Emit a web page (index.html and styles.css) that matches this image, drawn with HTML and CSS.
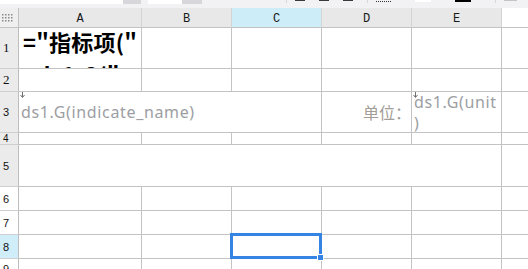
FILE: index.html
```html
<!DOCTYPE html>
<html lang="zh">
<head>
<meta charset="utf-8">
<title>Sheet</title>
<link rel="stylesheet" href="styles.css">
</head>
<body>
<div class="toolbar">
  <div class="tb-group">
    <span class="tb-input tb-w1"></span><span class="tb-drop"></span>
    <span class="tb-input tb-w2"></span><span class="tb-drop tb-drop2"></span>
  </div>
  <div class="tb-group tb-right">
    <span class="tb-sep"></span>
    <span class="tb-dash"></span><span class="tb-dash"></span><span class="tb-dash"></span>
    <span class="tb-sep"></span>
    <span class="tb-dots"></span>
    <span class="tb-white"></span>
    <span class="tb-black"></span>
    <span class="tb-sep"></span>
    <span class="tb-grey"></span>
    <span class="tb-grey tb-grey2"></span>
  </div>
</div>
<div class="sheet">
  <div class="corner">
    <svg width="11" height="8" viewBox="0 0 11 8">
      <g fill="#8a8a8a">
        <rect x="0" y="0" width="1.5" height="1.5"/><rect x="3" y="0" width="1.5" height="1.5"/><rect x="6" y="0" width="1.5" height="1.5"/><rect x="9" y="0" width="1.5" height="1.5"/>
        <rect x="0" y="3" width="1.5" height="1.5"/><rect x="3" y="3" width="1.5" height="1.5"/><rect x="6" y="3" width="1.5" height="1.5"/><rect x="9" y="3" width="1.5" height="1.5"/>
        <rect x="0" y="6" width="1.5" height="1.5"/><rect x="3" y="6" width="1.5" height="1.5"/><rect x="6" y="6" width="1.5" height="1.5"/><rect x="9" y="6" width="1.5" height="1.5"/>
      </g>
    </svg>
  </div>
  <div class="ch">A</div>
  <div class="ch">B</div>
  <div class="ch ch-active">C</div>
  <div class="ch">D</div>
  <div class="ch">E</div>
  <div class="ch ch-blank"></div>

  <div class="rh rh-serif">1</div>
  <div class="c formula"><span class="formula-text">="指标项("+ds1.G("unit")+")"</span></div>
  <div class="c"></div><div class="c"></div><div class="c"></div><div class="c"></div><div class="c f"></div>

  <div class="rh rh-serif">2</div>
  <div class="c"></div><div class="c"></div><div class="c"></div><div class="c"></div><div class="c"></div><div class="c f"></div>

  <div class="rh">3</div>
  <div class="c span3 expand">
    <svg class="arrow" width="5" height="6" viewBox="0 0 5 6"><path d="M2.5 0V5M0.5 3L2.5 5.5L4.5 3" fill="none" stroke="#707070" stroke-width="1"/></svg>
    <span class="data">ds1.G(indicate_name)</span>
  </div>
  <div class="c label">单位：</div>
  <div class="c expand unit">
    <svg class="arrow" width="5" height="6" viewBox="0 0 5 6"><path d="M2.5 0V5M0.5 3L2.5 5.5L4.5 3" fill="none" stroke="#707070" stroke-width="1"/></svg>
    <span class="data">ds1.G(unit<br>)</span>
  </div>
  <div class="c f"></div>

  <div class="rh rh-small">4</div>
  <div class="c"></div><div class="c"></div><div class="c"></div><div class="c"></div><div class="c"></div><div class="c f"></div>

  <div class="rh">5</div>
  <div class="c span5"></div>
  <div class="c f"></div>

  <div class="rh rh-white">6</div>
  <div class="c"></div><div class="c"></div><div class="c"></div><div class="c"></div><div class="c"></div><div class="c f"></div>

  <div class="rh rh-white">7</div>
  <div class="c"></div><div class="c"></div><div class="c"></div><div class="c"></div><div class="c"></div><div class="c f"></div>

  <div class="rh rh-active">8</div>
  <div class="c"></div><div class="c"></div>
  <div class="c selected"><span class="sel-box"></span><span class="sel-handle"></span></div>
  <div class="c"></div><div class="c"></div><div class="c f"></div>

  <div class="rh rh-white">9</div>
  <div class="c"></div><div class="c"></div><div class="c"></div><div class="c"></div><div class="c"></div><div class="c f"></div>
</div>
</body>
</html>
```

FILE: styles.css
```css
html, body {
  margin: 0;
  padding: 0;
  background: #ffffff;
  overflow: hidden;
}
body {
  width: 528px;
  height: 269px;
  font-family: "Noto Sans", "Noto Sans CJK SC", sans-serif;
}

/* toolbar strip */
.toolbar {
  height: 8px;
  background: #f2f2f4;
  display: flex;
  overflow: hidden;
}
.tb-group {
  display: flex;
  align-items: flex-start;
  height: 8px;
}
.tb-input {
  display: block;
  height: 4px;
  background: #ffffff;
}
.tb-w1 { width: 123px; }
.tb-w2 { width: 34px; margin-left: 7px; }
.tb-drop {
  display: block;
  width: 18px;
  height: 4px;
  background: #d7d7db;
}
.tb-drop2 { width: 20px; }
.tb-right {
  margin-left: 84px;
}
.tb-sep {
  display: block;
  width: 1px;
  height: 3px;
  background: #d8d8d8;
  margin-right: 8px;
}
.tb-dash {
  display: block;
  width: 10px;
  height: 1px;
  background: #3a3a3a;
  margin-right: 14px;
}
.tb-dots {
  display: block;
  width: 15px;
  height: 0;
  border-top: 1px dotted #333;
  margin-top: 1px;
  margin-right: 24px;
}
.tb-white {
  display: block;
  width: 16px;
  height: 2px;
  background: #ffffff;
  margin-right: 24px;
}
.tb-black {
  display: block;
  width: 16px;
  height: 2px;
  background: #000000;
  margin-right: 24px;
}
.tb-grey {
  display: block;
  width: 13px;
  height: 1px;
  background: #c4c4c4;
  margin-right: 13px;
}
.tb-grey2 { width: 8px; margin-right: 0; }

/* sheet grid */
.sheet {
  display: grid;
  grid-template-columns: 19px 123px 90px 90px 90px 90px 1fr;
  grid-template-rows: 20px 41px 23px 41px 12px 42px 24px 24px 24px 20px;
}
.sheet > div {
  box-sizing: border-box;
  border-right: 1px solid #c3c3c3;
  border-bottom: 1px solid #c3c3c3;
  min-width: 0;
  overflow: hidden;
}

.corner {
  background: #efefef;
  padding: 6px 0 0 2px;
}
.corner svg { display: block; }

.ch {
  background: #e8e8e8;
  border-right-color: #d4d4d4 !important;
  font-family: "Liberation Mono", monospace;
  font-size: 12px;
  color: #1a1a1a;
  display: flex;
  align-items: center;
  justify-content: center;
  padding-top: 2px;
}
.ch-active { background: #cdeef9; }
.sheet > .ch-blank {
  background: #ffffff;
  border-right: none;
}

.rh {
  background: #ebebeb;
  border-bottom-color: #cfcfcf !important;
  border-right-color: #bdbdbd !important;
  font-family: "Liberation Sans", sans-serif;
  font-size: 11px;
  color: #111;
  display: flex;
  align-items: center;
  padding-left: 3px;
}
.rh-serif {
  font-family: "Liberation Serif", serif;
  font-size: 13px;
}
.rh-small { font-size: 10px; }
.rh-white { background: #ffffff; }
.rh-active { background: #cfeef9; }

.c { background: #ffffff; }
.sheet > .f { border-right: none; }

.formula {
  padding: 0 0 0 4px;
}
.formula-text {
  display: block;
  margin-top: -3px;
  font-family: "Noto Sans CJK SC", sans-serif;
  font-weight: 700;
  font-size: 22px;
  line-height: 33px;
  letter-spacing: 0.2px;
  color: #000;
  word-break: break-all;
  line-break: anywhere;
}

.span3 { grid-column: span 3; }
.span5 { grid-column: span 5; }

.expand {
  position: relative;
  display: flex;
  align-items: center;
}
.arrow {
  position: absolute;
  left: 1px;
  top: 0;
  display: block;
}
.data {
  font-family: "Noto Sans", sans-serif;
  font-size: 16px;
  letter-spacing: 0.65px;
  color: #9c9ea3;
  padding-left: 2px;
}
.unit .data {
  display: block;
  line-height: 21px;
  white-space: nowrap;
  margin-top: 2px;
}

.label {
  display: flex;
  align-items: center;
  justify-content: flex-end;
  font-family: "Noto Sans CJK SC", sans-serif;
  font-size: 16px;
  color: #a29d97;
  padding-right: 0;
}

.selected {
  position: relative;
  overflow: visible !important;
}
.sel-box {
  position: absolute;
  left: -2px;
  top: -2px;
  right: -1px;
  bottom: -1px;
  border: 3px solid #3584e4;
  box-sizing: border-box;
}
.sel-handle {
  position: absolute;
  right: -3px;
  bottom: -3px;
  width: 5px;
  height: 5px;
  background: #3584e4;
  border: 1px solid #ffffff;
}
```
